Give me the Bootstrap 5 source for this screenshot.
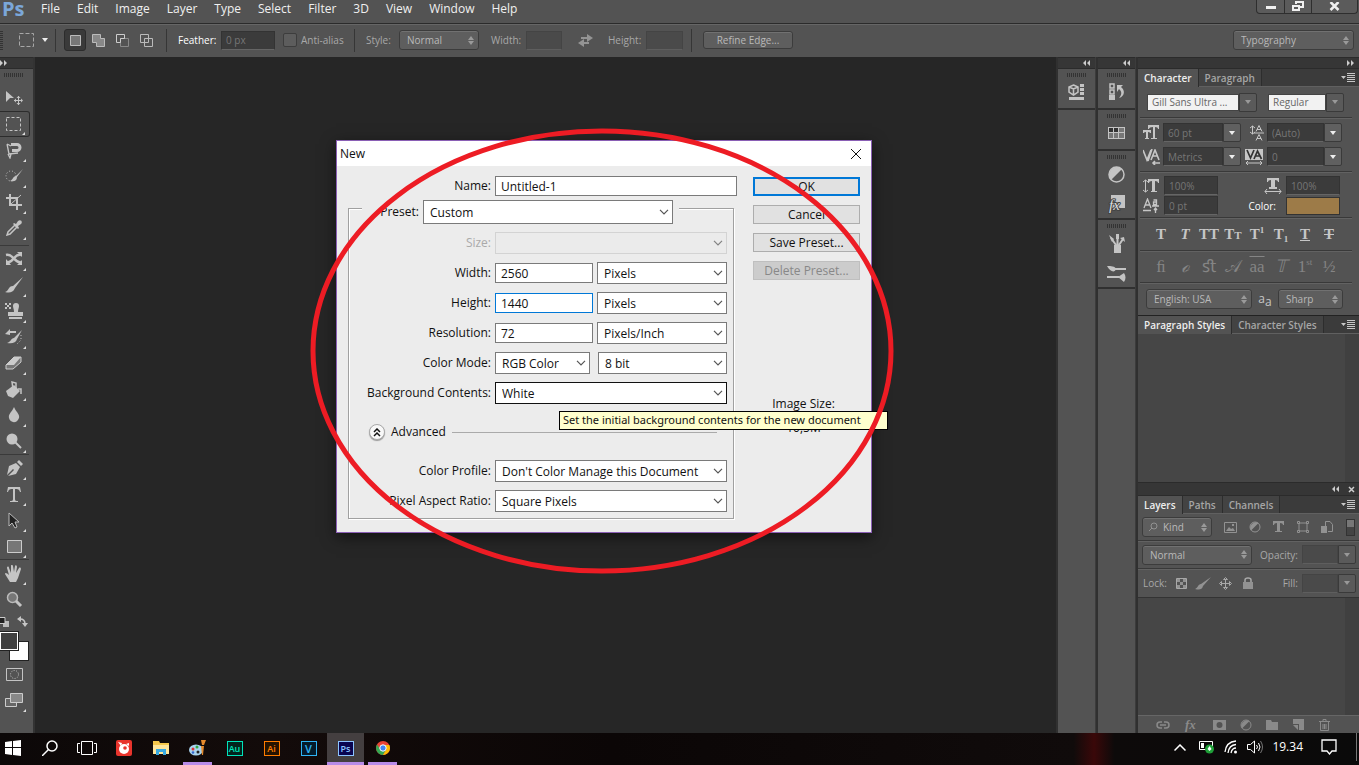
<!DOCTYPE html>
<html lang="en">
<head>
<meta charset="utf-8">
<meta name="viewport" content="width=device-width, initial-scale=1">
<title>Photoshop - New document</title>
<link href="https://cdn.jsdelivr.net/npm/bootstrap@5.3.0/dist/css/bootstrap.min.css" rel="stylesheet">
<style>
:root{--ps:#535353;--edge:#2b2b2b;--hi:#666;--ink:#c6c6c6;--dim:#a8a8a8}
body{font:10px/14px "Open Sans","Noto Sans",sans-serif;color:var(--ink);background:#262626;overflow:hidden}
button,input,select{font:inherit;color:inherit}
svg{display:block;flex:none}
.ico{fill:currentColor;stroke:none}
.ln{fill:none;stroke:currentColor}
/* menu bar */
.menubar{height:24px;background:var(--ps);border-bottom:1px solid var(--edge)}
.menus{gap:17px}
.menubar a{font-size:12px;line-height:18px;color:#f0f0f0;text-decoration:none}
.pslogo{width:41px;font:700 20px/18px "Open Sans",sans-serif;color:#7ba7d9;padding-left:2px}
.winctl{height:14px;border:1px solid #2e2e2e;border-top:0;border-radius:0 0 4px 4px;background:#5b5b5b;color:#f0f0f0;margin-right:1px}
.winctl button{border:0;background:none;padding:0;width:27px;height:13px;display:grid;place-items:center}
.winctl button:last-child{width:46px}
.winctl button+button{border-left:1px solid #2e2e2e}
/* option bar */
.optbar{height:33px;background:var(--ps);border-top:1px solid var(--hi);color:var(--dim);padding-bottom:2px}
.vsep{width:1px;height:23px;background:#363636}
.vgrip{width:3px;height:19px;background:repeating-linear-gradient(#333 0 1px,transparent 1px 2px)}
.ghost{border:0;background:none;padding:0;color:inherit;display:grid;place-items:center}
.selmode{width:24px}
.fld{background:#3b3b3b;border:1px solid #333;border-bottom-color:#656565;border-radius:0;color:#767676;height:19px;padding:0 4px;min-width:0}
.fld.faded{background:#4a4a4a;border-color:#444;border-bottom-color:#5e5e5e}
.updown,.psbtn{height:20px;border:1px solid #3c3c3c;border-radius:3px;color:#b9b9b9;padding:0 0 0 7px;background-color:#5e5e5e;box-shadow:inset 0 1px 0 #717171;line-height:16px}
.updown{appearance:none;background-image:url("data:image/svg+xml,%3Csvg xmlns='http://www.w3.org/2000/svg' width='6' height='9'%3E%3Cpath d='M0 4l3-4 3 4zM0 5h6l-3 4z' fill='%239a9a9a'/%3E%3C/svg%3E");background-repeat:no-repeat;background-position:right 4px center}
.psbtn{padding:0;height:18px}
.tick{appearance:none;width:14px;height:14px;border:1px solid #3d3d3d;border-radius:2px;background:#5d5d5d;margin:0}
.on{background:#3a3a3a;border:1px solid #2c2c2c;border-radius:3px}
/* toolbox and docks */
.strip{height:12px;background:#363636;border-top:1px solid var(--edge);border-bottom:1px solid var(--edge);color:#ccc}
.toolbox{width:35px;background:var(--ps);border-right:2px solid #333}
.grip{height:4px;width:19px;background:repeating-linear-gradient(90deg,#333 0 1px,transparent 1px 2px)}
.tool{width:30px;height:26px;border:0;padding:0 2px 0 0;background:none;color:#c4c4c4;display:grid;place-items:center;position:relative}
.tool.more::after{content:"";position:absolute;right:4px;bottom:1px;width:0;height:0;border-left:3px solid transparent;border-bottom:3px solid #ddd}
.tool.on{border-radius:0 3px 3px 0;border:1px solid #2c2c2c;border-left:0}
.rule{height:1px;width:29px;background:#3a3a3a}
.minis{width:28px;height:11px}
.swatches{width:30px;height:30px;position:relative}
.swatches button{position:absolute;width:20px;height:20px;padding:0;border:1px solid #222;box-shadow:inset 0 0 0 1px #fff}
.fgc{left:-1px;top:0;background:#404040;z-index:1}.bgc{left:9px;top:10px;background:#fff}
.stage{background:#262626}
.dock{width:40px;background:var(--ps);border-left:2px solid #303030;border-right:1px solid #3c3c3c;color:#c4c4c4}
.dock section{border-bottom:2px solid #303030;padding-top:4px;height:41px}
.dock section.pair{height:69px}
.dock button{height:30px;width:100%}
.panels{width:223px;background:var(--ps);border-left:2px solid #303030}
.tabbar{height:18px;background:#3b3b3b;border-bottom:1px solid #606060}
.tabbar button{border:0;border-right:1px solid #2d2d2d;background:#434343;color:#a6a6a6;font-weight:600;padding:0 6px;height:17px;line-height:16px}
.tabbar button.cur{background:var(--ps);color:#eee;height:18px}
.tabbar.lower{height:19px;border-top:1px solid #222}
.band{border-bottom:1px solid #393939;box-shadow:0 1px 0 #626262;margin:0 7px 0 2px}
.combo{height:19px}
.combo .fld{flex:1;height:19px}
.combo button{width:18px;border:1px solid #3a3a3a;border-radius:0 2px 2px 0;background:#606060;padding:0;display:grid;place-items:center;color:#eee}
.combo.white .fld{background:#f2f2f2;color:#666;height:17px;border:1px solid #444;margin-top:1px}
.combo.white button,.combo.dimmed button{background:#5a5a5a;color:#999}
.combo.dimmed{width:54px}
.fonts{height:31px;padding-left:7px;gap:11px}
.metrics{height:54px;padding:5px 0 5px 3px;grid-template-columns:20px 78px 26px 75px;row-gap:5px;align-items:center}
.scales{height:46px;padding:4px 0 2px 3px;grid-template-columns:21px 54px 68px 54px;row-gap:1px;align-items:center}
.glyph{height:33px;padding-left:9px}
.glyph button{width:24px;height:22px;border:0;background:none;padding:0;font:700 15px/18px "Liberation Serif",serif;color:#c6c6c6;white-space:nowrap}
.glyph.low{height:32px}
.glyph.low button{color:#858585;font-weight:400;font-size:17px}
.glyph small{font-size:9px}
.smallcap{font-size:11px}
.langs{height:32px;padding-left:8px}
.aa{width:26px;text-align:center;font-size:12px}
.aa sub{font-size:12px}
.list{background:#464646;border-right:14px solid #404040}
.kinds{padding:0 4px;height:27px;color:#929292}
.kinds .updown{width:70px;padding-left:20px}
.loupe{margin-left:-64px;margin-right:66px}
.gaps{gap:12px}
.lockbar{height:29px;padding:0 3px 0 5px;color:var(--dim);border-bottom:1px solid #333}
.actions{height:18px;padding:0 26px 0 18px;gap:14px;border-top:1px solid #666;color:#8a8a8a}
/* dialog */
.dlg{position:absolute;left:301px;top:83px;width:536px;background:#ececec;border:1px solid #8a5fb5;color:#111;font-size:12px;line-height:16px;box-shadow:0 4px 14px #0008}
.dlg h1{font-size:12px;line-height:25px;margin:0}
.titlebar{padding:0 9px 0 3px}
.dlgbody{padding:10px 11px 13px}
.dlg .tbox,.dlg .sel{border:1px solid #7a7a7a;border-radius:0;background-color:#fff;height:20px;padding:0 5px;color:#111;line-height:18px;min-width:0}
.dlg .sel{height:22px;padding:2px 16px 0 6px;appearance:none;background-image:url("data:image/svg+xml,%3Csvg xmlns='http://www.w3.org/2000/svg' width='10' height='6'%3E%3Cpath d='M1 .8l4 4 4-4' fill='none' stroke='%23555' stroke-width='1.2'/%3E%3C/svg%3E");background-repeat:no-repeat;background-position:right 3px center;background-size:10px 6px}
.dlg .sel:disabled{background-color:#ebebeb;border-color:#c9c9c9;opacity:.7}
.dlg .line{display:grid;grid-template-columns:142px 232px;column-gap:4px;align-items:center;height:30px}
.dlg .line>label{text-align:right;line-height:20px}
.dlg .num{width:98px}
.dlg .num.focused{border-color:#0078d7}
.group{border:1px solid #a0a0a0;box-shadow:inset 1px 1px 0 #fff,1px 1px 0 #fff;width:386px;height:311px;margin-top:12px}
.preset{margin:-9px 0 4px 13px;width:317px;height:24px;background:#ececec}
.preset label{width:57px;text-align:right;line-height:24px}
.dlg .wide{width:250px;height:24px}
.advanced{height:48px;padding:0 16px 0 20px;gap:6px}
.cmd{gap:9px;padding-top:1px}
.cmd button{height:19px;width:107px;border:1px solid #adadad;background:#e1e1e1;font-size:12px;line-height:16px;padding:0;color:#111}
.cmd button.ok{border:2px solid #0078d7;line-height:15px}
.cmd button:disabled{background:#ccc;border-color:#bfbfbf;color:#888}
.imgsize{margin-top:103px;line-height:24px;padding-right:6px}
.round{width:16px;height:16px;border-radius:50%;border:1px solid #aaa;background:#f8f8f8;padding:0;display:grid;place-items:center;box-shadow:0 1px 1px #999}
.tip{position:absolute;left:524px;top:354px;width:329px;height:19px;background:#ffffcd;border:1px solid #000;color:#111;font:11px/16px "Noto Sans",sans-serif;padding-left:3px;white-space:nowrap}
.ring{position:absolute;left:274px;top:70px;pointer-events:none}
/* taskbar */
.taskbar{height:32px;background:linear-gradient(90deg,#0c0808,#130b0a 20%,#0b0606 45%,#100b0b 79%,#3a0809 80.5%,#0d0a0a 82%,#0a0a0a);color:#fff}
.taskbar button{border:0;background:none;padding:0 0 2px;width:37px;height:32px;display:grid;place-items:center;color:inherit}
.taskbar .start{width:31px;padding-right:5px}
.taskbar .run{border-bottom:3px solid #b78be8;padding:1px 0 0;width:29px;margin:0 4px}
.taskbar .now{background:#443f40;width:37px;margin:0}
.app{width:16px;height:15px;border:1px solid;font:600 9px/13px "Open Sans",sans-serif;text-align:center}
.tray{gap:9px}
.clock{font-size:12px;line-height:28px;margin-right:9px}
.peek{width:1px;height:28px;background:#777;margin:0 2px 0 10px}
</style>
</head>
<body class="d-flex flex-column vh-100">
<nav class="menubar d-flex flex-shrink-0">
 <div class="pslogo">Ps</div>
 <div class="menus d-flex flex-grow-1">
  <a href="#">File</a><a href="#">Edit</a><a href="#">Image</a><a href="#">Layer</a><a href="#">Type</a><a href="#">Select</a><a href="#">Filter</a><a href="#">3D</a><a href="#">View</a><a href="#">Window</a><a href="#">Help</a>
 </div>
 <div class="winctl d-flex">
  <button aria-label="Minimize"><svg width="12" height="8"><path class="ico" d="M1 3h10v3H1z"/></svg></button>
  <button aria-label="Restore"><svg width="12" height="11"><path class="ln" stroke-width="2" d="M1 5h6v4H1zM4 3V1h7v5H8"/></svg></button>
  <button aria-label="Close"><svg width="12" height="10"><path class="ln" stroke-width="2.500" d="M1.500 0l8 8M9.500 0l-8 8"/></svg></button>
 </div>
</nav>

<div class="optbar d-flex align-items-center flex-shrink-0">
 <span class="vgrip"></span>
 <button class="ghost ms-3" aria-label="Marquee tool"><svg width="15" height="14"><path class="ln" stroke="#ccc" stroke-dasharray="4 2" d="M.5.5h14v13H.5z"/></svg></button>
 <button class="ghost" aria-label="Tool presets" style="width:21px"><svg width="6" height="4"><path fill="#eee" d="M0 0h6L3 4z"/></svg></button>
 <span class="vsep me-2"></span>
 <button class="ghost on" style="width:22px;height:22px" aria-label="New selection"><svg width="11" height="11"><path fill="#777" stroke="#bbb" d="M.5.5h10v10H.5z"/></svg></button>
 <button class="ghost selmode" aria-label="Add to selection"><svg width="13" height="13"><path fill="#888" stroke="#bbb" d="M.5.5h8v4h4v8h-8v-4h-4z"/></svg></button>
 <button class="ghost selmode" aria-label="Subtract from selection"><svg width="13" height="13"><path fill="none" stroke="#888" d="M4.500 4.500h8v8h-8z"/><path fill="none" stroke="#ccc" d="M4.500 8.500h-4v-8h8v4h-4z"/></svg></button>
 <button class="ghost selmode" aria-label="Intersect with selection"><svg width="13" height="13"><path fill="none" stroke="#bbb" d="M.5.5h8v8h-8zM4.500 4.500h8v8h-8z"/></svg></button>
 <span class="vsep" style="margin:0 11px 0 8px"></span>
 <label for="feather" class="text-white" style="width:43px">Feather:</label>
 <input id="feather" class="fld" style="width:54px" value="0 px">
 <input id="aa" type="checkbox" class="tick ms-2"><label for="aa" class="ms-1" style="width:53px">Anti-alias</label>
 <span class="vsep"></span>
 <label for="sty" style="width:33px;margin-left:11px">Style:</label>
 <select id="sty" class="updown" style="width:80px"><option>Normal</option></select>
 <label for="w" style="width:35px;margin-left:12px">Width:</label><input id="w" class="fld faded" style="width:36px">
 <button class="ghost" style="width:46px" aria-label="Swap"><svg width="15" height="13"><path fill="#949494" d="M3 3h6V0l6 4-6 4V5H3zM11 8H6V5L0 9l6 4v-3h5z"/></svg></button>
 <label for="h" style="width:38px">Height:</label><input id="h" class="fld faded" style="width:37px">
 <span class="vsep" style="margin:0 11px 0 8px"></span>
 <button class="psbtn" style="width:90px">Refine Edge...</button>
 <select class="updown ms-auto" style="width:121px;margin-right:5px" aria-label="Workspace"><option>Typography</option></select>
</div>

<main class="d-flex flex-grow-1" style="min-height:0">
 <aside class="toolbox flex-shrink-0">
  <div class="strip d-flex align-items-center"><svg width="8" height="6"><path class="ico" d="M0 0l3 3-3 3zM4 0l3 3-3 3z"/></svg></div>
  <div class="grip ms-1 mt-1 mb-2"></div>
  <button class="tool" aria-label="Move"><svg width="18" height="16"><path class="ico" d="M1 1l8 7H5l-4 4z"/><path class="ln" d="M9 10.500h8M13.500 6v9"/><path class="ico" d="M11.500 8l2-2 2 2zM11.500 13l2 2 2-2zM11 8.500l-2 2 2 2zM16 8.500l2 2-2 2z"/></svg></button>
  <button class="tool more on" aria-label="Rectangular marquee"><svg width="15" height="14"><path class="ln" stroke-dasharray="3 2" d="M.5.5h14v13H.5z"/></svg></button>
  <button class="tool more" aria-label="Lasso"><svg width="18" height="18"><path class="ln" stroke-width="1.300" d="M2 3l4 2M2 3l2 10 9-1M3 13l2 4 1-4"/><path class="ln" stroke-width="3" d="M6 3.500h6a3 3 0 010 6H7"/></svg></button>
  <button class="tool more" aria-label="Quick selection"><svg width="18" height="16"><circle cx="6" cy="8" r="5" class="ln" stroke-dasharray="1 2"/><path class="ico" d="M18 1l-6 8c0 4-3 5-7 4 3-1 3-5 6-5z"/></svg></button>
  <button class="tool more" aria-label="Crop"><svg width="16" height="16"><path class="ln" stroke-width="2" d="M4 0v11h12M0 4h11v12"/><path class="ln" d="M5 10L15 1"/></svg></button>
  <button class="tool more" aria-label="Eyedropper"><svg width="16" height="16"><path class="ln" stroke-width="1.500" d="M9 5l2 2-7 7-3 1 1-3z"/><path class="ico" d="M8 3l2 1 2-3c3-2 5 1 3 3l-3 2 1 2-1 1-5-5z"/></svg></button>
  <div class="rule mt-1"></div>
  <button class="tool more" aria-label="Healing"><svg width="18" height="14"><path class="ln" stroke-width="2.500" d="M1 3c7-2 9 9 15 7M16 3C9 1 8 12 2 10"/><path class="ico" d="M12 0l5 0 0 5zM1 7v6h5zM17 8v5h-5z"/></svg></button>
  <button class="tool more" aria-label="Brush"><svg width="18" height="16"><path class="ico" d="M18 0l-8 11c-2 5-6 5-10 4 4-1 3-6 8-6z"/></svg></button>
  <button class="tool more" aria-label="Clone stamp"><svg width="18" height="18"><path class="ico" d="M8 4a3 3 0 116 0c0 2-1 3-1 6h5v4H3v-4h6c0-3-1-4-1-6zM4 15h13v2H4zM0 1h2v2H0zM4 1h2v2H4zM2 3h2v2H2zM0 5h2v2H0zM4 5h2v2H4z"/></svg></button>
  <button class="tool more" aria-label="History brush"><svg width="18" height="16"><path class="ico" d="M17 1l-5 9c-1 4-5 5-10 4 4-1 4-5 7-5zM0 5l5-5v2h6v2H5v2z"/><path class="ln" stroke-dasharray="1 2" d="M16 6v5l-4 4"/></svg></button>
  <button class="tool more" aria-label="Eraser"><svg width="18" height="14"><path fill="#777" stroke="#ccc" d="M1 9v4h7l8-7V1H9z"/><path fill="#ccc" d="M1 9l8-8h7L9 9z"/></svg></button>
  <button class="tool more" aria-label="Paint bucket"><svg width="18" height="17"><path class="ico" d="M1 10l8-6 6 6-7 7-5-2z"/><path class="ln" stroke-width="1.500" d="M8 8L7 1l4 1v5M13 8h3v5"/></svg></button>
  <button class="tool more" aria-label="Blur"><svg width="12" height="16"><path class="ico" d="M6 0c2 5 6 7 5 11-2 6-9 5-10 0C0 7 4 5 6 0z"/></svg></button>
  <button class="tool more" aria-label="Dodge"><svg width="16" height="16"><circle cx="6" cy="6" r="5.500" class="ico"/><path class="ln" stroke-width="2" d="M9 9l6 6"/></svg></button>
  <div class="rule"></div>
  <button class="tool more" aria-label="Pen"><svg width="17" height="17"><path class="ico" d="M10 3l4 4-4 7-8 2 6-6-1-1-6 6L3 6zM11 2l2-2 4 4-2 2z"/></svg></button>
  <button class="tool more" aria-label="Type"><svg width="14" height="15"><path class="ico" d="M1 0h12l1 5h-1c-1-3-2-3-5-3v10c0 2 1 2 3 2v1H3v-1c2 0 3 0 3-2V2C3 2 2 2 1 5H0z"/></svg></button>
  <button class="tool more" aria-label="Path selection"><svg width="12" height="17"><path fill="#222" stroke="#bbb" d="M1 1v13l3-3 3 5 2-1-2-5h4z"/></svg></button>
  <button class="tool more" aria-label="Rectangle"><svg width="15" height="13"><path fill="#777" stroke="#ccc" d="M.5.5h14v12H.5z"/></svg></button>
  <div class="rule"></div>
  <button class="tool more" aria-label="Hand"><svg width="18" height="17"><path class="ico" d="M5 17L0 9c0-2 2-1 4 1L2 3c0-2 2-2 2 0l2 5V1c0-2 2-1 2 0l1 6 1-6c0-1 2-1 2 1l-1 6 3-5c1-1 2 0 2 1l-3 9-2 4z"/></svg></button>
  <button class="tool" aria-label="Zoom"><svg width="17" height="17"><circle cx="6.500" cy="6.500" r="5" fill="#777" stroke="#bbb" stroke-width="1.500"/><path class="ln" stroke-width="3" d="M10 10l5 5"/></svg></button>
  <div class="minis d-flex align-items-center justify-content-between my-1"><svg width="10" height="10"><path fill="#bbb" d="M3 4h6v6H3z"/><path fill="#222" stroke="#ccc" d="M-1 .5h6v6h-6z"/></svg><svg width="11" height="11"><path class="ico" d="M0 3l4-3v6zM5 7h6l-3 4z"/><path class="ln" stroke-width="1.500" d="M3 3q5 0 5 5"/></svg></div>
  <div class="swatches"><button class="fgc" aria-label="Foreground colour"></button><button class="bgc" aria-label="Background colour"></button></div>
  <button class="tool" aria-label="Quick mask"><svg width="17" height="13"><path class="ln" stroke="#999" d="M.5.5h16v12H.5z"/><circle cx="8.500" cy="6.500" r="4" class="ln" stroke-dasharray="1 1.500"/></svg></button>
  <button class="tool more" aria-label="Screen mode"><svg width="18" height="14"><path fill="#666" stroke="#ccc" d="M.5 5.500h11v8H.5z"/><path fill="#888" stroke="#ccc" d="M5.500.5h12v9h-12z"/></svg></button>
 </aside>

 <div class="stage position-relative flex-grow-1">
  <form class="dlg" onsubmit="return false">
   <div class="titlebar bg-white d-flex justify-content-between align-items-center">
    <h1>New</h1><button type="button" class="ghost" aria-label="Close"><svg width="12" height="12"><path class="ln" d="M1 1l10 10M11 1L1 11"/></svg></button>
   </div>
   <div class="dlgbody d-flex">
    <div>
     <div class="d-flex align-items-center"><label for="nm" class="text-end me-1" style="width:143px">Name:</label><input id="nm" class="tbox" style="width:242px" value="Untitled-1"></div>
     <div class="group">
      <div class="preset d-flex gap-1"><label for="ps">Preset:</label><select id="ps" class="sel wide"><option>Custom</option></select></div>
      <div class="line"><label for="sz" style="color:#aaa">Size:</label><select id="sz" class="sel" disabled><option></option></select></div>
      <div class="line"><label for="dw">Width:</label><div class="d-flex gap-1 align-items-center"><input id="dw" class="tbox num" value="2560"><select class="sel flex-fill" aria-label="Width unit"><option>Pixels</option></select></div></div>
      <div class="line"><label for="dh">Height:</label><div class="d-flex gap-1 align-items-center"><input id="dh" class="tbox num focused" value="1440"><select class="sel flex-fill" aria-label="Height unit"><option>Pixels</option></select></div></div>
      <div class="line"><label for="dr">Resolution:</label><div class="d-flex gap-1 align-items-center"><input id="dr" class="tbox num" value="72"><select class="sel flex-fill" aria-label="Resolution unit"><option>Pixels/Inch</option></select></div></div>
      <div class="line"><label for="cm">Color Mode:</label><div class="d-flex gap-2"><select id="cm" class="sel" style="width:95px"><option>RGB Color</option></select><select class="sel flex-fill" aria-label="Bit depth"><option>8 bit</option></select></div></div>
      <div class="line"><label for="bc">Background Contents:</label><select id="bc" class="sel" style="border-color:#111"><option>White</option></select></div>
      <div class="advanced d-flex align-items-center"><button type="button" class="round" aria-label="Collapse"><svg width="8" height="9"><path class="ln" stroke-width="1.500" d="M1 4l3-3 3 3M1 8l3-3 3 3"/></svg></button><span>Advanced</span><span class="flex-fill" style="border-top:1px solid #aaa"></span></div>
      <div class="line"><label for="cp">Color Profile:</label><select id="cp" class="sel"><option>Don't Color Manage this Document</option></select></div>
      <div class="line"><label for="pr">Pixel Aspect Ratio:</label><select id="pr" class="sel"><option>Square Pixels</option></select></div>
     </div>
    </div>
    <div class="cmd d-flex flex-column ms-auto text-center">
     <button class="ok">OK</button><button type="button">Cancel</button><button type="button">Save Preset...</button><button type="button" disabled>Delete Preset...</button>
     <div class="imgsize">Image Size:<br>10,5M</div>
    </div>
   </div>
  </form>
  <div class="tip" role="tooltip">Set the initial background contents for the new document</div>
  <svg class="ring" width="586" height="448"><ellipse cx="293" cy="224" rx="289" ry="220" fill="none" stroke="#ed1c24" stroke-width="5"/></svg>
 </div>

 <aside class="dock flex-shrink-0">
  <div class="strip d-flex align-items-center justify-content-end pe-1"><svg width="8" height="6"><path class="ico" d="M3 0L0 3l3 3zM7 0L4 3l3 3z"/></svg></div>
  <section><div class="grip mx-auto"></div>
   <button class="ghost" aria-label="3D properties"><svg width="17" height="17"><path class="ln" stroke-width="1.500" d="M5.500 1L10 3v5l-4.500 3L1 8V3zM1 3l4.500 2L10 3M5.500 5v6"/><path class="ico" d="M12 0h4v3h-4zM12 4h4v3h-4zM12 8h4v3h-4zM1 13h15v3H1z"/></svg></button></section>
 </aside>
 <aside class="dock flex-shrink-0">
  <div class="strip d-flex align-items-center justify-content-end pe-1"><svg width="8" height="6"><path class="ico" d="M3 0L0 3l3 3zM7 0L4 3l3 3z"/></svg></div>
  <section><div class="grip mx-auto"></div>
   <button class="ghost" aria-label="History"><svg width="16" height="18"><path class="ln" stroke-width="1.500" d="M1 1h4v4H1zM1 7h4v4H1z"/><path class="ico" d="M0 12h6v5H0z"/><path class="ico" d="M8 2h6l-2 2c5 4 3 10-2 11 3-4 3-6 0-9L8 9z"/></svg></button></section>
  <section><div class="grip mx-auto"></div>
   <button class="ghost" aria-label="Swatches"><svg width="17" height="12"><path class="ico" d="M0 0h17v12H0z"/><path fill="#333" d="M1 1h4v4H1zM6 1h4v4H6z"/><path fill="#777" d="M11 1h5v4h-5zM1 6h4v5H1zM6 6h4v5H6zM11 6h5v5h-5z"/></svg></button></section>
  <section class="pair"><div class="grip mx-auto"></div>
   <button class="ghost" aria-label="Adjustments"><svg width="17" height="17"><circle cx="8.500" cy="8.500" r="7.500" class="ln" stroke-width="1.500"/><path class="ico" d="M14 3A7.800 7.800 0 003 14z"/></svg></button>
   <button class="ghost" aria-label="Styles"><svg width="18" height="19"><path class="ico" d="M3 0h14v13H3z"/><text x="1" y="15" fill="#ddd" stroke="#444" stroke-width="2" paint-order="stroke" font-family="Liberation Serif,serif" font-style="italic" font-size="15">fx</text></svg></button></section>
  <section class="pair"><div class="grip mx-auto"></div>
   <button class="ghost" aria-label="Brush presets"><svg width="16" height="19"><path class="ico" d="M5 11h7v8H5z"/><path class="ln" stroke-width="2" d="M7 11L2 4M8.500 11V3M10 11l4-6"/><path class="ico" d="M0 1l5 4-2 3zM7 0h3v5H7zM11 4l4-1 1 5z"/></svg></button>
   <button class="ghost" aria-label="Brush"><svg width="19" height="17"><path class="ln" stroke-width="2" d="M7 4h12M0 12h12"/><path class="ico" d="M0 1c4 0 8 0 9 3-1 4-6 3-9-3zM11 12l6-4c2 3 2 6 0 9z"/></svg></button></section>
 </aside>

 <aside class="panels flex-shrink-0 d-flex flex-column">
  <div class="strip d-flex align-items-center justify-content-end pe-1 flex-shrink-0"><svg width="8" height="6"><path class="ico" d="M0 0l3 3-3 3zM4 0l3 3-3 3z"/></svg></div>
  <div class="tabbar d-flex flex-shrink-0"><button class="cur">Character</button><button>Paragraph</button><svg class="ms-auto mt-1 me-1" width="14" height="9"><path class="ico" d="M0 3h5L2.500 6zM6 0h8v1H6zM6 2h8v1H6zM6 4h8v1H6zM6 6h8v1H6zM6 8h8v1H6z"/></svg></div>
  <div class="fonts band d-flex align-items-center">
   <div class="combo white d-flex" style="width:110px"><input class="fld" aria-label="Font" value="Gill Sans Ultra ..."><button aria-label="Fonts"><svg width="6" height="4"><path class="ico" d="M0 0h6L3 4z"/></svg></button></div>
   <div class="combo white d-flex" style="width:76px"><input class="fld" aria-label="Font style" value="Regular"><button aria-label="Styles"><svg width="6" height="4"><path class="ico" d="M0 0h6L3 4z"/></svg></button></div>
  </div>
  <div class="metrics band d-grid">
   <svg width="16" height="15"><path class="ico" d="M5 0h11v4h-1q0-2-3-2v11h2v1H8v-1h2V2Q6 2 6 4H5zM0 5h8v3H7q0-1-2-1v6h1v1H2v-1h1V7Q1 7 1 8H0z"/></svg>
   <div class="combo d-flex"><input class="fld" aria-label="Font size" value="60 pt"><button aria-label="Sizes"><svg width="6" height="4"><path class="ico" d="M0 0h6L3 4z"/></svg></button></div>
   <svg class="ms-2" width="16" height="16"><path class="ln" d="M3.500 1v8M1 3l2.500-2L6 3M1 7l2.500 2L6 7M5 8h10M7 15.500l3-6 3 6M8 13.500h4M7 6.500l3-6 3 6M8 4.500h4"/></svg>
   <div class="combo d-flex"><input class="fld" aria-label="Leading" value="(Auto)"><button aria-label="Leadings"><svg width="6" height="4"><path class="ico" d="M0 0h6L3 4z"/></svg></button></div>
   <svg width="17" height="16"><path class="ln" stroke-width="1.600" d="M0 1l4 10L8 1M9 0L5 12M8 11l4-10 4 10M9 7h6M10 14h7M12 12l-2 2 2 2"/></svg>
   <div class="combo d-flex"><input class="fld" aria-label="Kerning" value="Metrics"><button aria-label="Kernings"><svg width="6" height="4"><path class="ico" d="M0 0h6L3 4z"/></svg></button></div>
   <svg class="ms-1" width="18" height="16"><path class="ico" d="M0 0h18v11H0z"/><path fill="none" stroke="#333" stroke-width="1.700" d="M2 1l3.500 8L9 1M9 10l3.500-8 4 8M10 7h5"/><path class="ln" d="M1 14h16M3 12l-2 2 2 2M15 12l2 2-2 2"/></svg>
   <div class="combo d-flex"><input class="fld" aria-label="Tracking" value="0"><button aria-label="Trackings"><svg width="6" height="4"><path class="ico" d="M0 0h6L3 4z"/></svg></button></div>
  </div>
  <div class="scales band d-grid">
   <svg width="17" height="14"><path class="ln" d="M2.500 1v12M0 3l2.500-2L5 3M0 11l2.500 2L5 11"/><path class="ico" d="M5 0h11v4h-1q0-2-3-2v10h2v1H8v-1h1V2Q6 2 6 4H5z"/></svg>
   <input class="fld" aria-label="Vertical scale" value="100%">
   <svg class="ms-auto me-1" width="18" height="16"><path class="ico" d="M3 0h12v4h-1q0-2-3-2v7h2v2H5V9h2V2Q4 2 4 4H3z"/><path class="ln" d="M1 13.500h16M3 11l-2 2.500L3 16M15 11l2 2.500-2 2.500"/></svg>
   <input class="fld" aria-label="Horizontal scale" value="100%">
   <svg width="16" height="15"><path class="ln" stroke-width="1.300" d="M1 10l3.500-9L8 10M2 7h5M0 12.500h8M9 8h7M10.500 2h3v4.500h-3V4h3M12.500 10v5M11 12l1.500-2 1.500 2"/></svg>
   <input class="fld" aria-label="Baseline shift" value="0 pt">
   <span class="text-white text-end" style="padding-right:10px">Color:</span>
   <button class="p-0 w-100" style="height:18px;border:1px solid #333;background:#9d7b48" aria-label="Text color"></button>
  </div>
  <div class="band glyph d-flex align-items-center"><button>T</button><button class="fst-italic">T</button><button>TT</button><button>T<span class="smallcap">T</span></button><button>T<sup><small>1</small></sup></button><button>T<sub><small>1</small></sub></button><button class="text-decoration-underline">T</button><button class="text-decoration-line-through">T</button></div>
  <div class="band glyph low d-flex align-items-center"><button>ﬁ</button><button class="fst-italic">ℴ</button><button>ﬆ</button><button>𝒜</button><button class="text-decoration-overline" style="text-decoration:overline">aa</button><button class="fst-italic">𝕋</button><button>1<sup><small>st</small></sup></button><button>½</button></div>
  <div class="langs d-flex align-items-center flex-shrink-0"><select class="updown" style="width:106px" aria-label="Language"><option>English: USA</option></select><span class="aa">a<sub>a</sub></span><select class="updown" style="width:65px" aria-label="Anti-aliasing"><option>Sharp</option></select></div>
  <div class="tabbar lower d-flex flex-shrink-0"><button class="cur">Paragraph Styles</button><button>Character Styles</button><svg class="ms-auto mt-1 me-1" width="14" height="9"><path class="ico" d="M0 3h5L2.500 6zM6 0h8v1H6zM6 2h8v1H6zM6 4h8v1H6zM6 6h8v1H6zM6 8h8v1H6z"/></svg></div>
  <div class="list flex-shrink-0" style="height:148px"></div>
  <div class="strip d-flex align-items-center justify-content-end gap-2 pe-1 flex-shrink-0" style="height:14px"><svg width="8" height="6"><path class="ico" d="M3 0L0 3l3 3zM7 0L4 3l3 3z"/></svg><svg width="7" height="7"><path class="ln" stroke-width="1.500" d="M1 1l5 5M6 1L1 6"/></svg></div>
  <div class="tabbar d-flex flex-shrink-0"><button class="cur">Layers</button><button>Paths</button><button>Channels</button><svg class="ms-auto mt-1 me-1" width="14" height="9"><path class="ico" d="M0 3h5L2.500 6zM6 0h8v1H6zM6 2h8v1H6zM6 4h8v1H6zM6 6h8v1H6zM6 8h8v1H6z"/></svg></div>
  <div class="kinds band d-flex align-items-center mx-0 flex-shrink-0">
   <select class="updown" aria-label="Filter kind"><option>Kind</option></select><svg class="loupe" width="10" height="10"><circle cx="6" cy="4" r="3" class="ln"/><path class="ln" d="M4 6L1 9"/></svg>
   <div class="gaps d-flex align-items-center">
   <svg width="13" height="11"><path class="ln" d="M.5.5h12v10H.5z"/><path class="ico" d="M2 9l3-4 2 2 2-1 2 3zM8 2h2v2H8z"/></svg>
   <svg width="12" height="12"><circle cx="6" cy="6" r="5" class="ln"/><path class="ico" d="M9.500 2A5.500 5.500 0 002 9.500z"/></svg>
   <svg width="12" height="12"><path class="ico" d="M0 0h11v4h-1q0-2-3-2v8h2v1H2v-1h2V2Q1 2 1 4H0z"/></svg>
   <svg width="12" height="12"><path class="ln" d="M2 2h8v8H2zM.5.5h2v2h-2zM9.500.5h2v2h-2zM.5 9.500h2v2h-2zM9.500 9.500h2v2h-2z"/></svg>
   <svg width="12" height="12"><path class="ln" d="M4.500 5V.5H9l2.500 3v7H7"/><path class="ico" d="M0 5h6v7H0z"/></svg>
   </div>
   <span class="ms-auto" style="width:9px;height:17px;border:1px solid #333;background:linear-gradient(#777 50%,#444 50%)"></span>
  </div>
  <div class="band d-flex align-items-center mx-0 flex-shrink-0" style="height:28px;padding:0 3px 0 4px"><select class="updown" style="width:110px" aria-label="Blend mode"><option>Normal</option></select><label for="op" class="ms-auto me-1" style="color:var(--dim)">Opacity:</label><div class="combo dimmed d-flex"><input id="op" class="fld faded"><button aria-label="Opacity slider"><svg width="6" height="4"><path class="ico" d="M0 0h6L3 4z"/></svg></button></div></div>
  <div class="lockbar d-flex align-items-center flex-shrink-0"><span style="width:33px">Lock:</span>
   <svg width="11" height="11"><path class="ln" stroke="#929292" d="M.5.5h10v10H.5z"/><path fill="#929292" d="M1 1h3v3H1zM7 1h3v3H7zM4 4h3v3H4zM1 7h3v3H1zM7 7h3v3H7z"/></svg>
   <svg class="ms-2" width="16" height="13"><path fill="#929292" d="M16 0L8 9c-1 4-4 4-8 3 3-1 3-5 6-5z"/></svg>
   <svg class="ms-2" width="13" height="13"><path class="ln" stroke="#929292" d="M2 6.500h9M6.500 2v9M4.500 2.500l2-2 2 2zM4.500 10.500l2 2 2-2zM2.500 4.500l-2 2 2 2zM10.500 4.500l2 2-2 2z"/></svg>
   <svg style="margin-left:11px" width="10" height="12"><path fill="#929292" d="M0 5h10v7H0z"/><path class="ln" stroke="#929292" stroke-width="1.500" d="M2 5V3q0-2 3-2t3 2v2"/></svg>
   <label for="fi" class="ms-auto me-1">Fill:</label><div class="combo dimmed d-flex"><input id="fi" class="fld faded"><button aria-label="Fill slider"><svg width="6" height="4"><path class="ico" d="M0 0h6L3 4z"/></svg></button></div></div>
  <div class="list flex-grow-1"></div>
  <div class="actions d-flex align-items-center flex-shrink-0">
   <svg width="14" height="8"><path class="ln" stroke-width="1.500" d="M6 1H4a3 3 0 000 6h2M8 1h2a3 3 0 010 6H8M4 4h6"/></svg>
   <svg width="15" height="14"><text x="1" y="11" class="ico" font-family="Liberation Serif,serif" font-style="italic" font-weight="700" font-size="13">fx</text></svg>
   <svg width="13" height="10"><path class="ico" fill-rule="evenodd" d="M0 0h13v10H0zM6.500 2a3 3 0 100 6 3 3 0 000-6z"/></svg>
   <svg width="12" height="12"><circle cx="6" cy="6" r="5" class="ln"/><path class="ico" d="M9.500 2A5.500 5.500 0 002 9.500z"/></svg>
   <svg width="12" height="10"><path class="ico" d="M0 0h5l1 2h6v8H0z"/></svg>
   <svg width="12" height="11"><path class="ico" d="M1 0h11v11H7V5H1zM1 6h5v5z"/></svg>
   <svg width="12" height="12"><path class="ln" d="M1 2.500h11M5 2V.5h3V2M2.500 3v8.500h8V3M5 5v5M8 5v5M6.500 5v5"/></svg>
  </div>
 </aside>
</main>

<footer class="taskbar d-flex flex-shrink-0">
 <button class="start" aria-label="Start"><svg width="16" height="16"><path class="ico" d="M0 2l7-1v6H0zM8 1l8-1v7H8zM0 8h7v7l-7-1zM8 8h8v8l-8-1z"/></svg></button>
 <button aria-label="Search"><svg width="16" height="16"><circle cx="10" cy="6" r="5" class="ln" stroke-width="1.500"/><path class="ln" stroke-width="1.500" d="M6.500 9.500L0 16"/></svg></button>
 <button aria-label="Task view"><svg width="20" height="14"><path class="ln" d="M4.500.5h11v13h-11zM3 2.500H.5v9H3M17 2.500h2.500v9H17"/></svg></button>
 <button aria-label="Recorder"><svg width="16" height="16"><rect width="16" height="16" rx="2" fill="#e8342c"/><circle cx="8" cy="9" r="5" fill="#fff"/><path fill="#fff" d="M2 2l4 1-1 3zM10 4l3-1v3z"/><circle cx="9" cy="8" r="1.800" fill="#e8342c"/></svg></button>
 <button aria-label="File Explorer"><svg width="16" height="14"><path fill="#f5c84c" d="M0 0h6l1 2h9v11H0z"/><path fill="#ffe69b" d="M0 4h16v9H0z"/><path fill="#39a9e0" d="M3 14V8h10v6h-3v-3H6v3z"/></svg></button>
 <button class="run" aria-label="Paint"><svg width="17" height="16"><ellipse cx="7" cy="10" rx="7" ry="5.500" fill="#a9d4ee"/><circle cx="4" cy="9" r="1.500" fill="#d33"/><circle cx="8" cy="7" r="1.500" fill="#3a4"/><circle cx="4" cy="12.500" r="1.300" fill="#36c"/><circle cx="9" cy="12" r="1.500" fill="#222"/><path fill="#e58a2c" d="M12 6h3l-1 9h-1zM12 0h5l-2 5h-2z"/></svg></button>
 <button aria-label="Audition"><span class="app" style="color:#00e4bb;background:#02231d">Au</span></button>
 <button aria-label="Illustrator"><span class="app" style="color:#ff7c00;background:#261300">Ai</span></button>
 <button aria-label="Vegas"><span class="app" style="color:#2fb4f5;background:#041b2b;font-size:11px">V</span></button>
 <button class="run now" aria-label="Photoshop"><span class="app" style="color:#8cc4ff;background:#0a0550">Ps</span></button>
 <button class="run" aria-label="Chrome"><svg width="14" height="14"><circle cx="7" cy="7" r="7" fill="#ea4335"/><path fill="#34a853" d="M1 3.500A7 7 0 007 14l3-5-6-1z"/><path fill="#fbbc05" d="M13.300 4A7 7 0 017 14l3.500-6L8 4z"/><circle cx="7" cy="7" r="3.200" fill="#4285f4" stroke="#fff"/></svg></button>
 <div class="tray ms-auto d-flex align-items-center pb-1">
  <svg width="12" height="7"><path class="ln" stroke-width="1.500" d="M.5 6.500L6 1l5.500 5.500"/></svg>
  <svg class="ms-1" width="16" height="14"><path class="ln" d="M.5 1.500h13v8H.5z"/><path class="ico" d="M2 3h3v5H2z"/><circle cx="10.500" cy="9" r="4.500" fill="#1fa038"/><path fill="#fff" d="M10.500 6l2 3-2 2-2-2z"/></svg>
  <svg width="14" height="14"><path class="ln" stroke-width="1.300" d="M1 12Q2 2 12 1M4 13Q5 5 12 4.500M7 13q1-5 5-5"/><circle cx="11.500" cy="12" r="1.500" class="ico"/></svg>
  <svg width="16" height="14"><path class="ln" d="M.5 4.500h3l4-3.500v12l-4-3.500h-3z"/><path class="ln" d="M9.500 5q2 2 0 4M11.500 3q3 4 0 8"/><path fill="none" stroke="#777" d="M13.500 1q4 6 0 12"/></svg>
  <span class="clock">19.34</span>
  <svg width="16" height="16"><path class="ln" stroke-width="1.300" d="M1 1h14v11h-4l-2.500 3L6 12H1z"/></svg>
  <span class="peek"></span>
 </div>
</footer>
<script src="https://cdn.jsdelivr.net/npm/bootstrap@5.3.0/dist/js/bootstrap.bundle.min.js"></script>
</body>
</html>
